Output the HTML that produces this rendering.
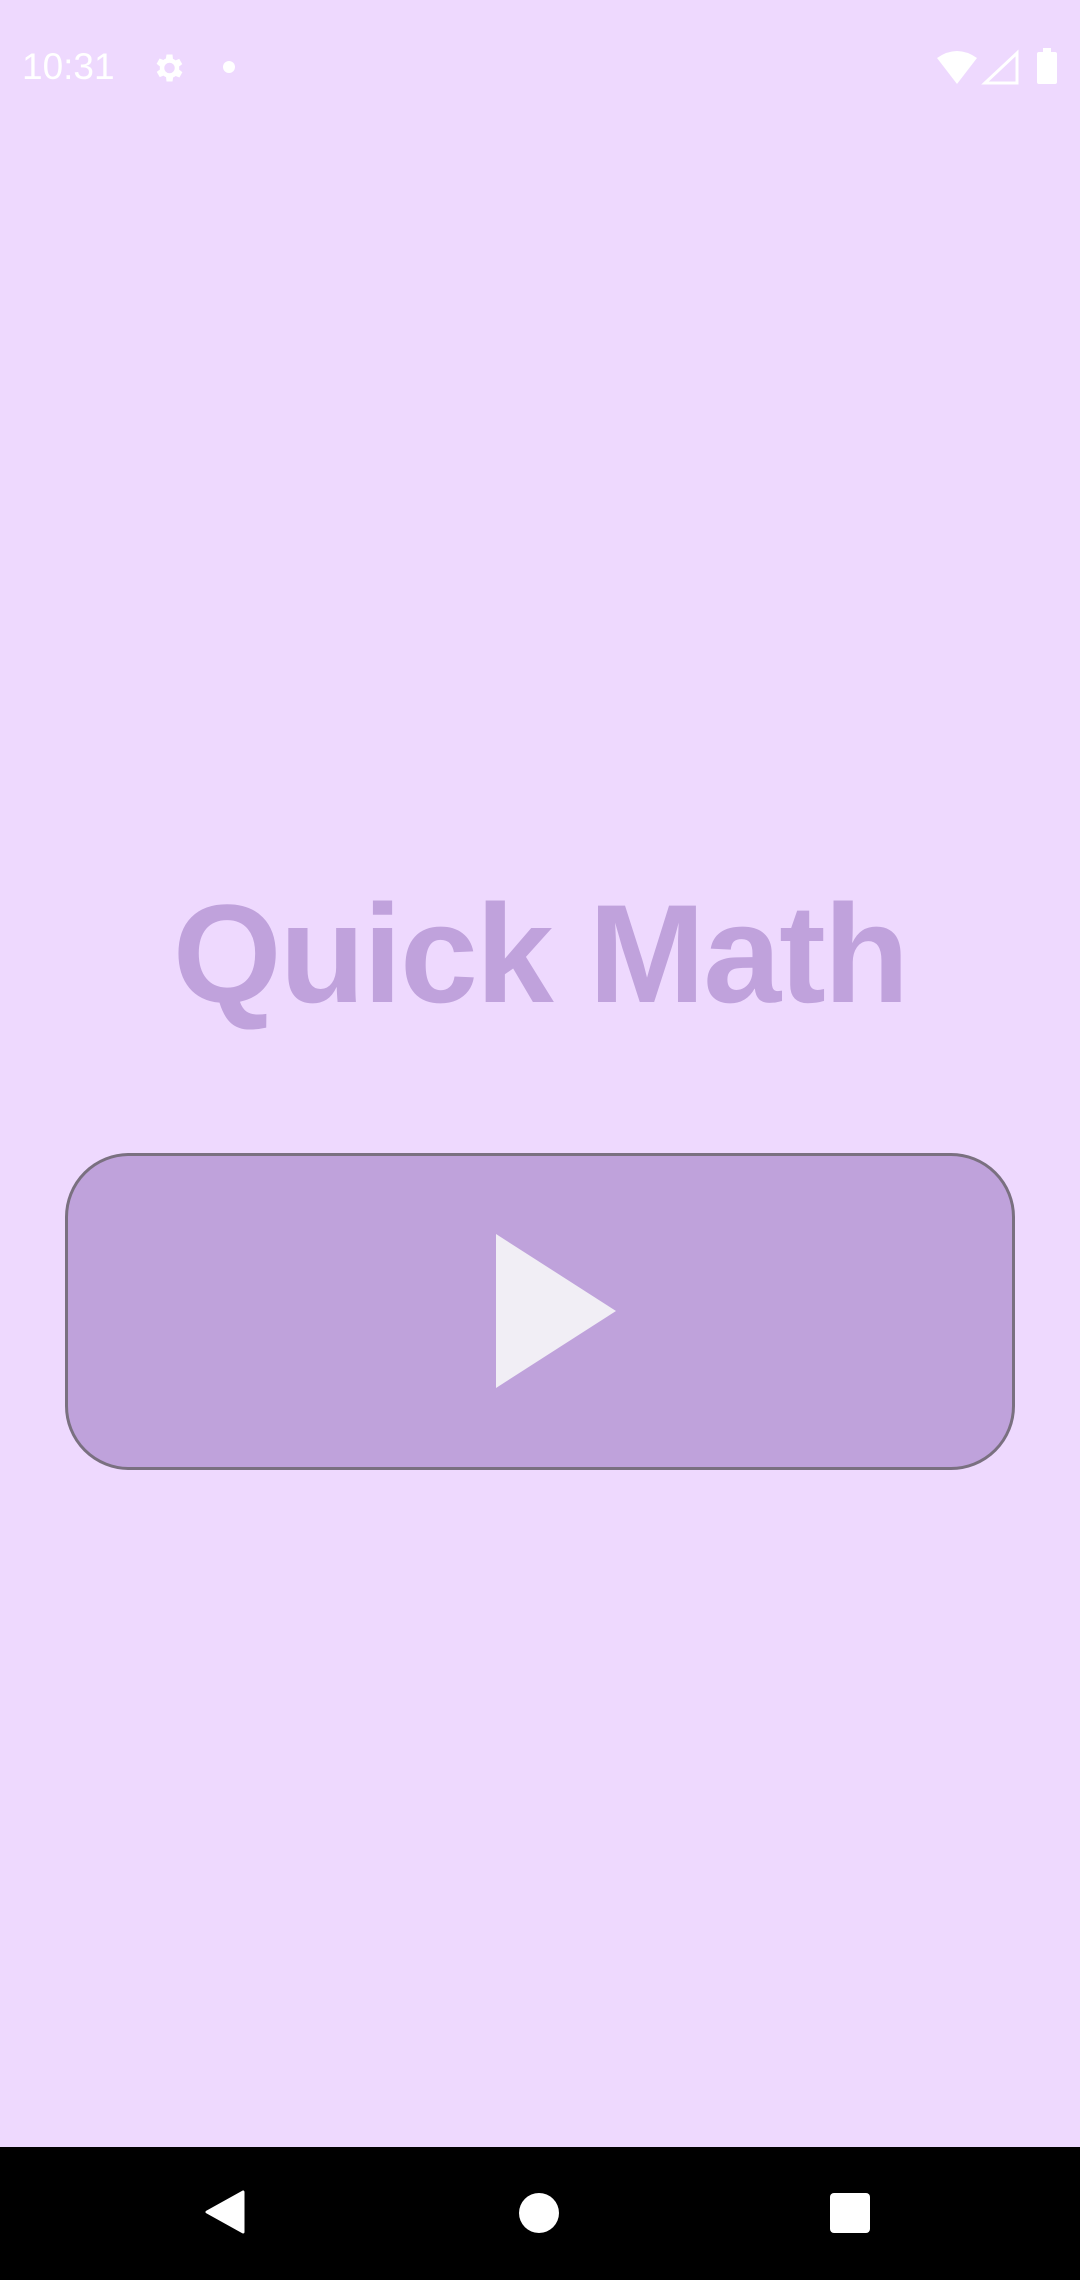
<!DOCTYPE html>
<html><head><meta charset="utf-8"><style>
html,body{margin:0;padding:0}
body{width:1080px;height:2280px;background:#eed9fe;position:relative;overflow:hidden;font-family:"Liberation Sans",sans-serif}
.time{position:absolute;left:22px;top:46px;font-size:37px;color:#fff}
.title{position:absolute;left:0;width:1080px;top:884px;line-height:1;text-align:center;font-size:140px;font-weight:bold;color:#c0a2dc;font-family:"Liberation Sans",sans-serif;letter-spacing:-2px}
.btn{position:absolute;left:65px;top:1153px;width:944px;height:311px;border:3px solid #7a7080;border-radius:64px;background:#bfa2db}
.nav{position:absolute;left:0;top:2147px;width:1080px;height:133px;background:#000}
</style></head><body>
<div class="time">10:31</div>
<svg style="position:absolute;left:150px;top:50px" width="36" height="36" viewBox="0 0 24 24"><path fill="#fff" d="M19.4 13a7.5 7.5 0 000-2l2.1-1.6-2-3.5-2.5 1a7 7 0 00-1.7-1L15 3h-4l-.4 2.7a7 7 0 00-1.7 1l-2.5-1-2 3.5L6.6 11a7.5 7.5 0 000 2l-2.1 1.6 2 3.5 2.5-1a7 7 0 001.7 1L11 21h4l.4-2.7a7 7 0 001.7-1l2.5 1 2-3.5zM13 15.5a3.5 3.5 0 110-7 3.5 3.5 0 010 7z"/></svg>
<div style="position:absolute;left:223px;top:61px;width:12px;height:12px;border-radius:50%;background:#fff"></div>
<svg style="position:absolute;left:935px;top:48px" width="130" height="38" viewBox="0 0 130 38"><path fill="#fff" d="M2 10 Q22 -4 42 10 L22 36Z"/><path fill="none" stroke="#fff" stroke-width="3" d="M50 35 L82 5 L82 35Z"/><rect x="102" y="4" width="20" height="32" rx="2" fill="#fff"/><rect x="108" y="0" width="8" height="5" fill="#fff"/></svg>
<div class="title">Quick Math</div>
<div class="btn"></div>
<svg style="position:absolute;left:496px;top:1234px" width="121" height="155"><polygon points="0,0 120,77 0,154" fill="#f1eef5"/></svg>
<div class="nav"></div>
<svg style="position:absolute;left:205px;top:2190px" width="42" height="44"><path d="M38 2 L38 42 L2 22Z" fill="#fff" stroke="#fff" stroke-width="3" stroke-linejoin="round"/></svg>
<div style="position:absolute;left:519px;top:2193px;width:40px;height:40px;border-radius:50%;background:#fff"></div>
<div style="position:absolute;left:830px;top:2193px;width:40px;height:40px;border-radius:4px;background:#fff"></div>
</body></html>
